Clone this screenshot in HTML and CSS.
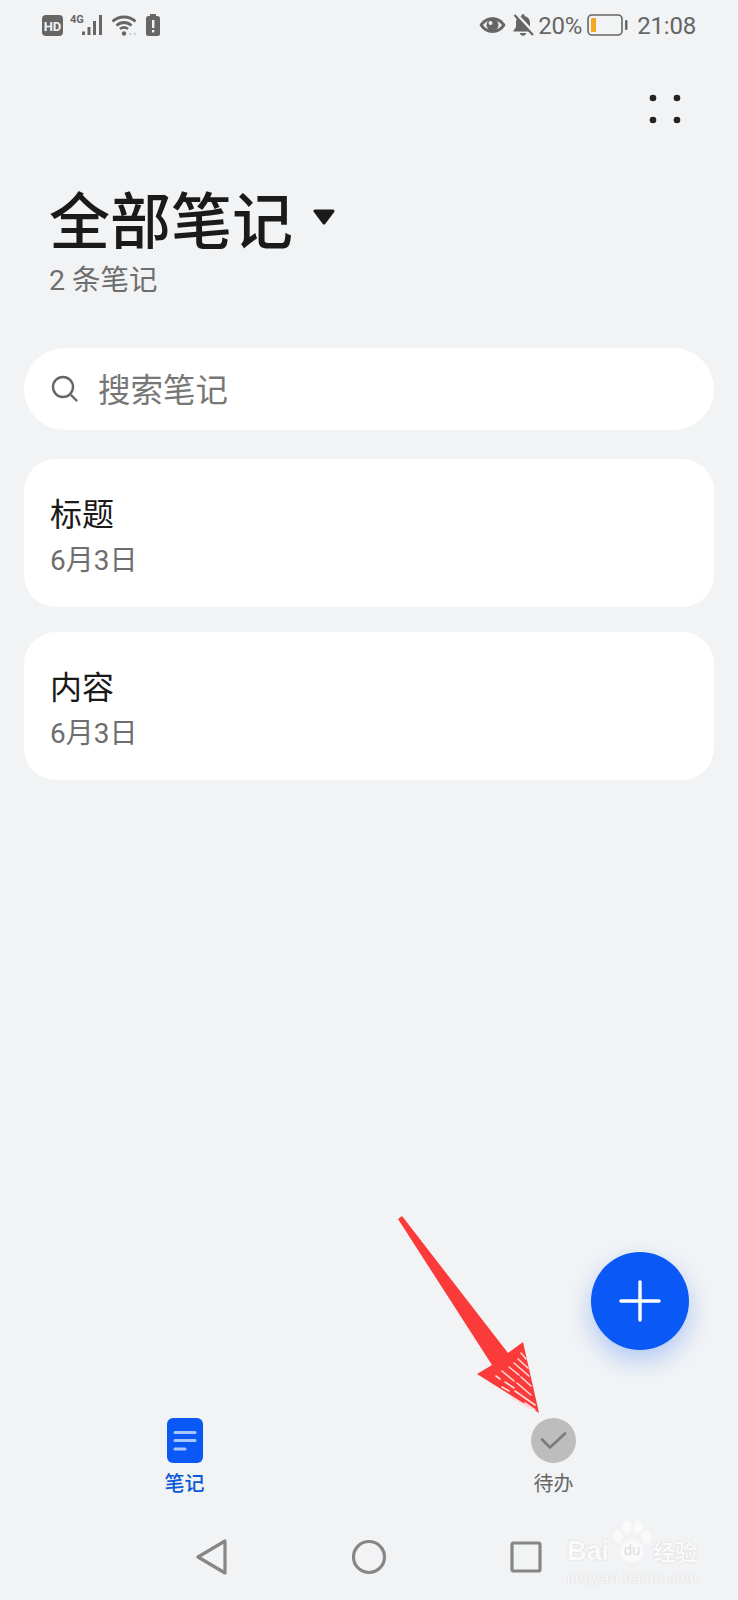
FILE: index.html
```html
<!DOCTYPE html>
<html lang="zh-CN">
<head>
    <meta charset="UTF-8">
    <meta name="viewport" content="width=device-width, initial-scale=1.0">
    <title>全部笔记</title>
    <link rel="stylesheet" href="styles.css">
</head>
<body>
    <div class="phone">
        <!-- Status bar -->
        <div class="status-bar">
            <div class="status-left">
                <svg width="21" height="21" viewBox="0 0 21 21"><rect width="21" height="21" rx="4" fill="#666"/><text x="10.5" y="15.5" class="hd-text">HD</text></svg>
                <svg class="signal" width="36" height="22" viewBox="0 0 36 22">
                    <text x="1" y="9" class="net-text">4G</text>
                    <rect x="13" y="17.500" width="3" height="3.500" fill="#666"/>
                    <rect x="18.500" y="13" width="3" height="8" fill="#666"/>
                    <rect x="24" y="7" width="3" height="14" fill="#666"/>
                    <rect x="30" y="1" width="3" height="20" fill="#666"/>
                </svg>
                <svg class="wifi" width="28" height="23" viewBox="0 0 28 23" fill="none" stroke="#666" stroke-width="2.800">
                    <path d="M1.500 7.500C8 1.500 18 1.500 24.500 7.500"/>
                    <path d="M5.500 11.500C10 7.500 16 7.500 20.500 11.500"/>
                    <path d="M9 15C11.500 13 14.500 13 17 15"/>
                    <circle cx="13" cy="19.500" r="2.200" fill="#666" stroke="none"/>
                    <path d="M20 18.500l-2 1.500 2 1.500zM23 18.500l2 1.500-2 1.500z" fill="#bbb" stroke="none"/>
                </svg>
                <svg class="alert-batt" width="14" height="22" viewBox="0 0 14 22"><rect x="4" y="0" width="6" height="2" fill="#666"/><rect y="2" width="14" height="20" rx="2.500" fill="#666"/><rect x="6" y="6" width="2.400" height="8" fill="#f1f3f5"/><rect x="6" y="16" width="2.400" height="2.400" fill="#f1f3f5"/></svg>
            </div>
            <div class="status-right">
                <svg width="27" height="18" viewBox="0 0 27 18"><path d="M0.500 9C6 -1.500 21 -1.500 26.500 9C21 19.500 6 19.500 0.500 9Z" fill="#666"/><path d="M4 9C8.500 2.500 18.500 2.500 23 9C18.500 15.500 8.500 15.500 4 9Z" fill="#f1f3f5"/><circle cx="13.500" cy="9" r="6" fill="#666"/><circle cx="11.500" cy="7" r="2" fill="#f1f3f5"/></svg>
                <svg class="bell" width="21" height="23" viewBox="0 0 21 23"><path d="M10 2c4.500 0 7 3 7 7v4l3 4.500H0l3-4.500V8c0-3 2.500-6 7-6z" fill="#666"/><rect x="8.500" y="0" width="3" height="3" rx="1.500" fill="#666"/><path d="M7 19h6c0 3.500-6 3.500-6 0z" fill="#666"/><path d="M3 0L21 19" stroke="#f1f3f5" stroke-width="3"/><path d="M1.500 1L20 21" stroke="#666" stroke-width="2.200"/></svg>
                <span class="status-text pct">20%</span>
                <svg class="batt" width="41" height="22" viewBox="0 0 41 22"><rect x="1" y="1" width="34" height="20" rx="4" fill="none" stroke="#666" stroke-width="1.600"/><rect x="4" y="4" width="5" height="14" rx="1" fill="#f5a623"/><rect x="38" y="6" width="2.500" height="10" rx="1" fill="#666"/></svg>
                <span class="status-text time">21:08</span>
            </div>
        </div>

        <!-- Top action -->
        <div class="top-action">
            <svg width="32" height="30" viewBox="0 0 32 30" fill="#222">
                <circle cx="4" cy="4" r="3.300"/><circle cx="28" cy="4" r="3.300"/>
                <circle cx="4" cy="26" r="3.300"/><circle cx="28" cy="26" r="3.300"/>
            </svg>
        </div>

        <!-- Heading -->
        <div class="heading">
            <div class="heading-row">
                <h1>全部笔记</h1>
                <svg class="caret" width="22" height="16" viewBox="0 0 22 16"><path d="M2 2h18l-9 12z" fill="#1a1a1a" stroke="#1a1a1a" stroke-width="3" stroke-linejoin="round"/></svg>
            </div>
            <div class="count">2 条笔记</div>
        </div>

        <!-- Search and notes -->
        <div class="search">
            <svg width="28" height="28" viewBox="0 0 28 28" fill="none" stroke="#666" stroke-width="2.400"><circle cx="12" cy="12" r="10"/><path d="M20.500 20.500l5 5" stroke-linecap="round"/></svg>
            <span>搜索笔记</span>
        </div>

        <div class="note-card">
            <div class="note-title">标题</div>
            <div class="note-date">6月3日</div>
        </div>
        <div class="note-card">
            <div class="note-title">内容</div>
            <div class="note-date">6月3日</div>
        </div>

        <div class="spacer"></div>

        <div class="fab-row">
            <div class="fab">
                <svg width="42" height="42" viewBox="0 0 42 42" stroke="#fff" stroke-width="3.400" stroke-linecap="round"><path d="M21 2v38M2 21h38"/></svg>
            </div>
        </div>

        <!-- Bottom tabs -->
        <div class="tabs">
            <div class="tab active">
                <svg width="36" height="45" viewBox="0 0 36 45"><rect width="36" height="45" rx="6" fill="#0a59f7"/><g stroke="#a9c6fb" stroke-width="3" stroke-linecap="round"><path d="M8 14.500h20M8 22.500h20"/><path d="M8 31h10"/></g></svg>
                <span>笔记</span>
            </div>
            <div class="tab">
                <svg width="45" height="45" viewBox="0 0 45 45"><circle cx="22.500" cy="22.500" r="22.500" fill="#bdbdbd"/><path d="M11 21.500l8 8 15-14" fill="none" stroke="#7a7a7a" stroke-width="2.600" stroke-linecap="round" stroke-linejoin="round"/></svg>
                <span>待办</span>
            </div>
        </div>

        <!-- System navigation -->
        <div class="nav-bar">
            <svg width="32" height="36" viewBox="0 0 32 36" fill="none" stroke="#868686" stroke-width="3.200" stroke-linejoin="round"><path d="M2 18L29 2v32z"/></svg>
            <svg width="36" height="36" viewBox="0 0 36 36" fill="none" stroke="#868686" stroke-width="3.200"><circle cx="18" cy="18" r="15.500"/></svg>
            <svg width="32" height="32" viewBox="0 0 32 32" fill="none" stroke="#868686" stroke-width="3.200" stroke-linejoin="round"><rect x="2" y="2" width="28" height="28" rx="1.500"/></svg>
        </div>

        <!-- Red arrow drawn over the screenshot -->
        <svg class="arrow" width="160" height="210" viewBox="0 0 160 210">
            <path d="M8 9L12 6L118 143L133 132L149 203L87 164L102 155Z" fill="#fb3a3a"/>
            <g stroke="#ffdada" stroke-width="1.600" stroke-linecap="round">
                <path d="M131 143l5 6M128 149l10 9M124 153l15 13M119 157l10 8M131 167l10 9M112 161l12 10M127 173l14 12M106 166l4 3M115 172l9 6M112 177l7 4M125 181l20 14M121 187l18 11M135 193l10 7"/>
            </g>
        </svg>

        <!-- Watermark -->
        <div class="watermark">
            <div class="wm-top">
                <span class="wm-bai">Bai</span>
                <span class="wm-paw">
                    <svg width="38" height="42" viewBox="0 0 38 42" fill="#fafafa"><ellipse cx="5" cy="16" rx="4.500" ry="6.500"/><ellipse cx="14" cy="7" rx="4.500" ry="6.500"/><ellipse cx="25" cy="7" rx="4.500" ry="6.500"/><ellipse cx="33" cy="17" rx="4.500" ry="6.500"/></svg>
                    <span class="wm-du">du</span>
                </span>
                <span class="wm-cn">经验</span>
            </div>
            <div class="wm-url">jingyan.baidu.com</div>
        </div>
    </div>
</body>
</html>
```

FILE: styles.css
```css
/* General page */
body {
    margin: 0;
    background-color: #f1f3f5;
    font-family: Roboto, "Noto Sans CJK SC", sans-serif;
}

.phone {
    position: relative;
    width: 738px;
    height: 1600px;
    display: flex;
    flex-direction: column;
    overflow: hidden;
}

/* Status bar */
.status-bar {
    height: 50px;
    padding: 0 42px;
    display: flex;
    justify-content: space-between;
    align-items: center;
    flex-shrink: 0;
}

.status-left, .status-right {
    display: flex;
    align-items: center;
}

.hd-text {
    font-family: Roboto, sans-serif;
    font-size: 13px;
    font-weight: 700;
    fill: #f1f3f5;
    text-anchor: middle;
}

.net-text {
    font-family: Roboto, sans-serif;
    font-size: 11px;
    font-weight: 700;
    fill: #666;
}

.signal {
    margin-left: 6px;
}

.wifi {
    margin-left: 6px;
}

.alert-batt {
    margin-left: 7px;
}

.status-text {
    padding-top: 2px;
    font-size: 24px;
    letter-spacing: -0.2px;
    color: #666;
    line-height: 30px;
}

.bell {
    margin-left: 7px;
}

.pct {
    margin-left: 4px;
}

.batt {
    margin-left: 5px;
}

.time {
    margin-left: 9px;
}

/* Top action */
.top-action {
    margin-top: 44px;
    padding-right: 57px;
    display: flex;
    justify-content: flex-end;
}

/* Heading */
.heading {
    margin-top: 57px;
    padding-left: 49px;
}

.heading-row {
    display: flex;
    align-items: center;
    height: 74px;
}

h1 {
    margin: 0;
    font-family: "Noto Sans CJK SC", sans-serif;
    font-size: 61px;
    font-weight: 500;
    line-height: 74px;
    color: #1a1a1a;
}

.caret {
    margin: -2px 0 0 20px;
}

.count {
    margin-top: 8px;
    font-family: Roboto, "Noto Sans CJK SC", sans-serif;
    font-size: 28.500px;
    line-height: 36px;
    color: #6e6e6e;
}

/* Search box */
.search {
    margin: 49px 24px 0;
    height: 82px;
    padding-left: 27px;
    display: flex;
    align-items: center;
    gap: 19px;
    background: #fff;
    border-radius: 41px;
    font-size: 32.500px;
    color: #777;
}

.search span {
    margin-bottom: 4px;
}

/* Note cards */
.note-card {
    margin: 25px 24px 0;
    height: 148px;
    padding: 34px 26px 0;
    box-sizing: border-box;
    display: flex;
    flex-direction: column;
    background: #fff;
    border-radius: 32px;
}

.search + .note-card {
    margin-top: 29px;
}

.note-title {
    font-size: 32px;
    line-height: 44px;
    color: #1a1a1a;
}

.note-date {
    margin-top: 5px;
    font-size: 28px;
    line-height: 38px;
    color: #6e6e6e;
}

.spacer {
    flex: 1;
}

/* Floating button */
.fab-row {
    padding-right: 49px;
    display: flex;
    justify-content: flex-end;
}

.fab {
    width: 98px;
    height: 98px;
    display: flex;
    align-items: center;
    justify-content: center;
    background: #0a59f7;
    border-radius: 50%;
    box-shadow: 0 10px 24px rgba(10, 89, 247, 0.28);
}

/* Bottom tabs */
.tabs {
    margin-top: 68px;
    display: grid;
    grid-template-columns: 1fr 1fr;
}

.tab {
    display: flex;
    flex-direction: column;
    align-items: center;
    font-size: 20px;
    line-height: 24px;
    color: #666;
}

.tab span {
    margin-top: 9px;
}

.tab.active {
    color: #0a59d7;
    font-weight: 500;
}

/* System navigation */
.nav-bar {
    margin-top: 26px;
    height: 78px;
    box-sizing: border-box;
    padding: 0 196px 8px;
    display: flex;
    justify-content: space-between;
    align-items: center;
}

/* Things laid over the screenshot */
.arrow {
    position: absolute;
    left: 390px;
    top: 1210px;
}

.watermark {
    position: absolute;
    left: 567px;
    top: 1520px;
    color: #fafafa;
    text-shadow: 0 0 2px #d0d0d0;
}

.wm-top {
    display: flex;
    align-items: flex-start;
    height: 42px;
}

.wm-bai {
    font-family: "Liberation Sans", sans-serif;
    font-size: 27px;
    font-weight: 700;
    line-height: 30px;
    margin-top: 16px;
}

.wm-paw {
    position: relative;
    width: 38px;
    height: 42px;
    margin-left: 4px;
}

.wm-du {
    position: absolute;
    left: 7px;
    top: 20px;
    width: 24px;
    height: 22px;
    background: #fafafa;
    border-radius: 50%;
    font-family: "Liberation Sans", sans-serif;
    font-size: 15px;
    line-height: 20px;
    text-align: center;
    color: #ddd;
    text-shadow: none;
}

.wm-cn {
    margin-left: 2px;
    margin-top: 20px;
    font-size: 22px;
    line-height: 26px;
    font-weight: 700;
}

.wm-url {
    font-family: "Liberation Sans", sans-serif;
    font-size: 15px;
    line-height: 18px;
    letter-spacing: 0.6px;
    margin-top: 7px;
}
```
